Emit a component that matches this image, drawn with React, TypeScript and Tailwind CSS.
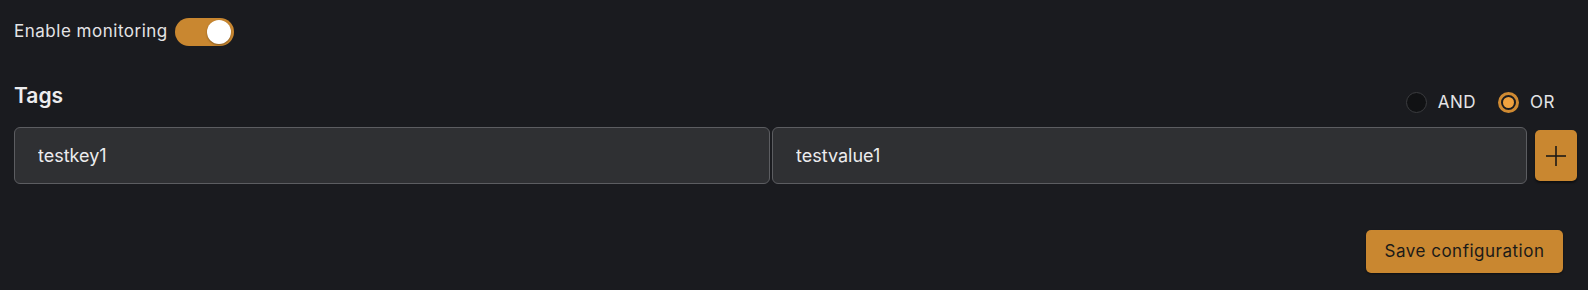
import React, { useState } from 'react';

const PlusIcon: React.FC = () => (
  <svg width="20" height="20" viewBox="0 0 20 20" fill="none" stroke="#1d1a16" strokeWidth="1.6" strokeLinecap="butt">
    <line x1="10" y1="0" x2="10" y2="20" />
    <line x1="0" y1="10" x2="20" y2="10" />
  </svg>
);

const Radio: React.FC<{ checked: boolean; label: string; onClick: () => void }> = ({ checked, label, onClick }) => (
  <button type="button" onClick={onClick} className="flex items-center gap-[11px] h-[21px]">
    {checked ? (
      <span className="w-[21px] h-[21px] rounded-full border-[3px] border-[#cf8a32] bg-[#1a1b1f] flex items-center justify-center">
        <span className="w-[11px] h-[11px] rounded-full bg-[#f0a23f]" />
      </span>
    ) : (
      <span className="w-[21px] h-[21px] rounded-full border border-[#3b3c3f] bg-[#111214]" />
    )}
    <span className="text-[17px] leading-[21px] tracking-[0.03em] text-[#e4e4e6]">{label}</span>
  </button>
);

const App: React.FC = () => {
  const [enabled, setEnabled] = useState(true);
  const [mode, setMode] = useState<'AND' | 'OR'>('OR');
  const [tagKey, setTagKey] = useState('testkey1');
  const [tagValue, setTagValue] = useState('testvalue1');

  return (
    <div className="min-h-screen bg-[#1a1b1f] font-['Inter','Liberation_Sans',sans-serif] text-[#e4e4e6] pl-[14px] pr-[11px]">
      <div className="pt-[18px] flex items-center gap-[7px] h-[46px]">
        <span className="text-[17px] tracking-[0.03em]">Enable monitoring</span>
        <button
          type="button"
          onClick={() => setEnabled(!enabled)}
          className={`w-[59px] h-[28px] rounded-full bg-[#c98730] flex items-center p-[2px] pr-[3px] ${enabled ? 'justify-end' : 'justify-start'}`}
        >
          <span className="w-[24px] h-[24px] rounded-full bg-white shadow-[0_1px_2px_rgba(0,0,0,0.35)]" />
        </button>
      </div>

      <div className="mt-[36px] flex items-start justify-between">
        <h3 className="text-[21px] font-semibold leading-[28px] text-[#ececee]">Tags</h3>
        <div className="mt-[10px] flex items-center gap-[22px] pr-[22px]">
          <Radio checked={mode === 'AND'} label="AND" onClick={() => setMode('AND')} />
          <Radio checked={mode === 'OR'} label="OR" onClick={() => setMode('OR')} />
        </div>
      </div>

      <div className="mt-[14px] flex items-center">
        <input
          value={tagKey}
          onChange={e => setTagKey(e.target.value)}
          className="w-[756px] h-[57px] rounded-[6px] border border-[#5c5d61] bg-[#2f3033] pl-[23px] text-lg text-[#ececee] outline-none"
        />
        <input
          value={tagValue}
          onChange={e => setTagValue(e.target.value)}
          className="ml-[2px] w-[755px] h-[57px] rounded-[6px] border border-[#5c5d61] bg-[#2f3033] pl-[23px] text-lg text-[#ececee] outline-none"
        />
        <button
          type="button"
          className="ml-[8px] w-[42px] h-[51px] rounded-[5px] bg-[#c98730] flex items-center justify-center shadow-[0_2px_2px_rgba(0,0,0,0.45)]"
        >
          <PlusIcon />
        </button>
      </div>

      <div className="mt-[46px] flex justify-end pr-[14px]">
        <button
          type="button"
          className="w-[197px] h-[43px] rounded-[5px] bg-[#c98730] text-[17px] tracking-[0.03em] text-[#1b1a18] shadow-[0_1px_2px_rgba(0,0,0,0.45)]"
        >
          Save configuration
        </button>
      </div>
    </div>
  );
};

export default App;
